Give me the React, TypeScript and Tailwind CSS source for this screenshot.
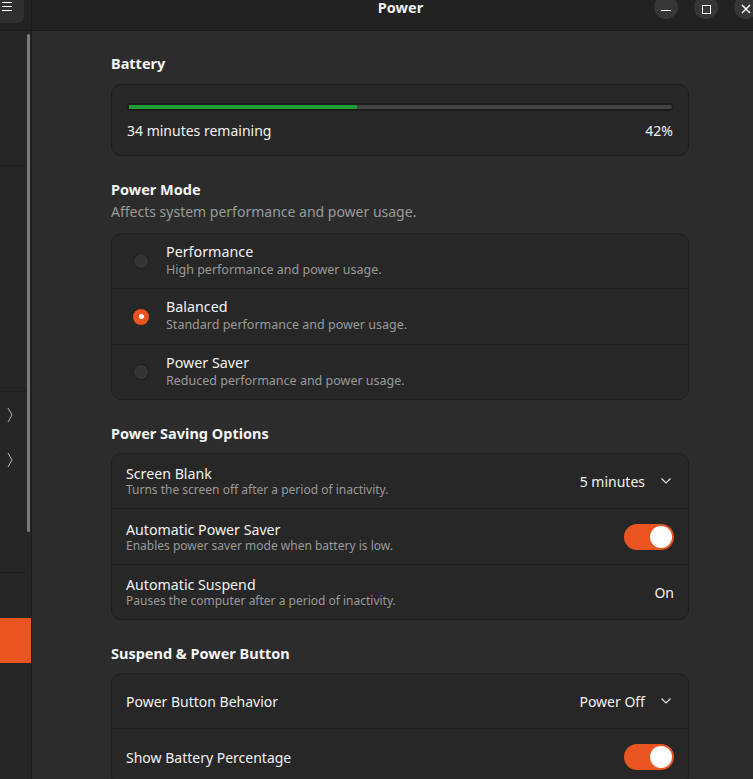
import React from 'react';

const font = { fontFamily: '"Noto Sans", "Open Sans", sans-serif' };

const Chevron: React.FC = () => (
  <svg width="12" height="8" viewBox="0 0 12 8" className="ml-[15px]">
    <polyline points="1.5,1.5 6,6 10.5,1.5" fill="none" stroke="#e8e8e8" strokeWidth="1.1" />
  </svg>
);

const Toggle: React.FC = () => (
  <div className="w-[50px] h-[26px] rounded-full bg-[#e95420] flex items-center justify-end pr-[2px]">
    <div className="w-[22px] h-[22px] rounded-full bg-white" />
  </div>
);

const Radio: React.FC<{ checked?: boolean }> = ({ checked }) =>
  checked ? (
    <div className="w-[16px] h-[16px] rounded-full bg-[#e95420] flex items-center justify-center">
      <div className="w-[5px] h-[5px] rounded-full bg-white" />
    </div>
  ) : (
    <div className="w-[16px] h-[16px] rounded-full bg-[#343434] border border-[#1e1e1e]" />
  );

const Heading: React.FC<{ children: React.ReactNode }> = ({ children }) => (
  <h2 className="text-[14.5px] font-bold leading-[20px] text-[#f6f6f6]">{children}</h2>
);

const Card: React.FC<{ children: React.ReactNode; className?: string }> = ({ children, className }) => (
  <div className={'rounded-[10px] border border-[#1f1f1f] bg-[#272727] divide-y divide-[#1f1f1f] ' + (className ?? '')}>
    {children}
  </div>
);

// two-line row label used in the power saving card
const RowLabel: React.FC<{ title: string; sub: string }> = ({ title, sub }) => (
  <div className="flex flex-col">
    <span className="text-[14.2px] leading-[17px]">{title}</span>
    <span className="text-[12px] leading-[14px] mt-[1px] text-[#9a9a9a]">{sub}</span>
  </div>
);

const modes = [
  { title: 'Performance', sub: 'High performance and power usage.', h: 'h-[55px]' },
  { title: 'Balanced', sub: 'Standard performance and power usage.', checked: true, h: 'h-[56px]' },
  { title: 'Power Saver', sub: 'Reduced performance and power usage.', h: 'h-[54px]' },
];

const SideChevron: React.FC = () => (
  <svg width="6" height="16" viewBox="0 0 6 16">
    <polyline points="1,1 5,8 1,15" fill="none" stroke="#b5b5b5" strokeWidth="1" />
  </svg>
);

export default function App() {
  return (
    <div style={font} className="w-[753px] h-[779px] overflow-hidden flex bg-[#2c2c2c] text-[#f2f2f2]">
      {/* sidebar, cut off by the screenshot */}
      <aside className="w-[32px] shrink-0 flex flex-col bg-[#262626] border-r border-[#1b1b1b]">
        <div className="h-[31px] shrink-0 bg-[#222222] border-b border-[#1b1b1b]">
          <div className="w-[24px] h-[23px] bg-[#303030] rounded-br-[7px] flex flex-col gap-[3px] pt-[2px] pl-[2px]">
            <div className="w-[10px] h-px bg-white" />
            <div className="w-[10px] h-px bg-white" />
            <div className="w-[10px] h-px bg-white" />
          </div>
        </div>
        <div className="relative flex-1 flex flex-col">
          <div className="h-[135px] border-b border-[#1f1f1f] mr-[4px]" />
          <div className="h-[226px] border-b border-[#1f1f1f] mr-[4px]" />
          <div className="h-[45px] flex items-center pl-[7px]"><SideChevron /></div>
          <div className="h-[45px] flex items-center pl-[7px]"><SideChevron /></div>
          <div className="h-[91px] border-b border-[#1f1f1f] mr-[4px]" />
          <div className="h-[45px]" />
          <div className="h-[45px] bg-[#e95420]" />
          <div className="absolute left-[27px] top-[3px] w-[3px] h-[498px] bg-[#7a7a7a] rounded-full" />
        </div>
      </aside>

      <main className="flex-1 flex flex-col min-w-0">
        <header className="relative h-[31px] shrink-0 bg-[#222222] border-b border-[#1b1b1b]">
          <div className="text-center pl-[16px] text-[14.5px] font-bold leading-[16px] -mt-px">Power</div>
          <div className="absolute right-[-5px] top-[-5px] flex gap-[16px]">
            <div className="w-[24px] h-[24px] rounded-full bg-[#363636] flex items-center justify-center pt-[4px]">
              <div className="w-[10px] h-[1.5px] bg-white mt-[3px]" />
            </div>
            <div className="w-[24px] h-[24px] rounded-full bg-[#363636] flex items-center justify-center pt-[4px]">
              <div className="w-[9px] h-[9px] border-[1.5px] border-white" />
            </div>
            <div className="w-[24px] h-[24px] rounded-full bg-[#363636] flex items-center justify-center pt-[4px]">
              <svg width="10" height="10" viewBox="0 0 10 10">
                <path d="M1 1 L9 9 M9 1 L1 9" stroke="white" strokeWidth="1.5" />
              </svg>
            </div>
          </div>
        </header>

        <div className="pl-[79px] pt-[22px]">
          <div className="w-[578px]">
            <Heading>Battery</Heading>
            <Card className="mt-[11px] h-[72px] px-[15px] pt-[18px]">
              <div className="h-[8px] rounded-full bg-[#1c1c1c] p-[1.5px]">
                <div className="h-full bg-[#444444] rounded-full">
                  <div className="h-full w-[42%] bg-[#1f9d36]" />
                </div>
              </div>
              <div className="flex justify-between text-[14px] leading-[20px] mt-[10px] !border-t-0">
                <span>34 minutes remaining</span>
                <span>42%</span>
              </div>
            </Card>

            <div className="mt-[23px]">
              <Heading>Power Mode</Heading>
              <p className="text-[14px] leading-[20px] mt-[3px] text-[#9a9a9a]">Affects system performance and power usage.</p>
            </div>
            <Card className="mt-[11px]">
              {modes.map((m) => (
                <div key={m.title} className={m.h + ' flex items-center'}>
                  <div className="w-[55px] pl-[21px] shrink-0"><Radio checked={m.checked} /></div>
                  <div className="-ml-[1px] flex flex-col pb-[2px]">
                    <span className="text-[14.3px] leading-[19px]">{m.title}</span>
                    <span className="text-[12.5px] leading-[18px] text-[#9a9a9a]">{m.sub}</span>
                  </div>
                </div>
              ))}
            </Card>

            <div className="mt-[23px]"><Heading>Power Saving Options</Heading></div>
            <Card className="mt-[10px]">
              <div className="h-[55px] flex items-center justify-between px-[14px]">
                <RowLabel title="Screen Blank" sub="Turns the screen off after a period of inactivity." />
                <div className="flex items-center text-[14px] pr-[2px]">5 minutes<Chevron /></div>
              </div>
              <div className="h-[56px] flex items-center justify-between px-[14px]">
                <RowLabel title="Automatic Power Saver" sub="Enables power saver mode when battery is low." />
                <Toggle />
              </div>
              <div className="h-[54px] flex items-center justify-between px-[14px]">
                <RowLabel title="Automatic Suspend" sub="Pauses the computer after a period of inactivity." />
                <span className="text-[14px]">On</span>
              </div>
            </Card>

            <div className="mt-[23px]"><Heading>Suspend &amp; Power Button</Heading></div>
            <Card className="mt-[10px]">
              <div className="h-[55px] flex items-center justify-between px-[14px]">
                <span className="text-[14px]">Power Button Behavior</span>
                <div className="flex items-center text-[14px] pr-[2px]">Power Off<Chevron /></div>
              </div>
              <div className="h-[56px] flex items-center justify-between px-[14px]">
                <span className="text-[14px]">Show Battery Percentage</span>
                <Toggle />
              </div>
            </Card>
          </div>
        </div>
      </main>
    </div>
  );
}
